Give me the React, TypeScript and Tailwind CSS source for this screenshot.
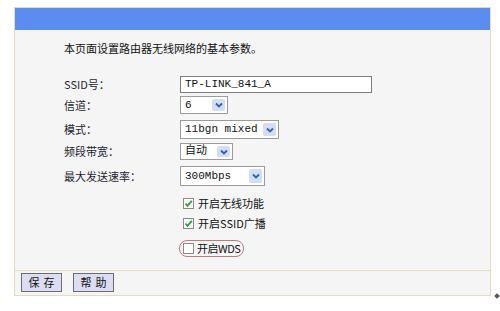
import React from "react";

const cjk = { fontFamily: '"Noto Sans CJK SC", "Noto Sans", sans-serif' };
const mono = { fontFamily: '"Liberation Mono", "Noto Sans CJK SC", monospace' };

function Select({ value, width, height }: { value: string; width: number; height: number }) {
  return (
    <div
      className="flex items-center border border-[#9a9a9a] bg-white"
      style={{ width, height }}
    >
      <span className="flex-1 whitespace-nowrap pl-[4px] text-[11px] leading-none text-[#111]" style={mono}>
        {value}
      </span>
      <span className="mr-[2px] flex h-[calc(100%-4px)] w-[13px] items-center justify-center rounded-[2px] bg-[#d3def5]">
        <svg width="8" height="6" viewBox="0 0 8 6">
          <path d="M1 1.5 L4 4.5 L7 1.5" stroke="#2f5fc4" strokeWidth="1.8" fill="none" />
        </svg>
      </span>
    </div>
  );
}

function Check({ checked }: { checked: boolean }) {
  return (
    <span className="flex h-[11px] w-[11px] shrink-0 items-center justify-center border border-[#8a8a8a] bg-white">
      {checked && (
        <svg width="9" height="9" viewBox="0 0 9 9">
          <path d="M1.5 4.5 L3.5 6.8 L7.8 1.8" stroke="#2f9a3a" strokeWidth="1.8" fill="none" />
        </svg>
      )}
    </span>
  );
}

function Row({ label, h, mt, children }: { label: string; h: number; mt: number; children: React.ReactNode }) {
  return (
    <div className="flex items-center" style={{ height: h, marginTop: mt }}>
      <span className="w-[116px] whitespace-nowrap text-[11px] text-[#1e1e30]" style={cjk}>
        {label}
      </span>
      {children}
    </div>
  );
}

export default function App() {
  return (
    <div className="h-[311px] w-[500px] bg-white pt-[7px] pl-[14px]">
      <div className="flex items-end">
        <div className="w-[477px] border border-[#e4dabd] bg-[#f5f5f6]">
          <div className="h-[22px] bg-[#5b8df1]" />
          <div className="h-[241px] border-b border-[#e4dabd] pt-[10px] pl-[49px]">
            <div className="h-[16px] text-[11px] leading-[16px] text-[#111]" style={cjk}>
              本页面设置路由器无线网络的基本参数。
            </div>
            <div className="mt-[20px]">
              <Row label="SSID号：" h={17} mt={0}>
                <div className="flex h-[17px] w-[192px] items-center border border-[#7d7d7d] bg-white pl-[4px] text-[11px] text-[#111]" style={mono}>
                  TP-LINK_841_A
                </div>
              </Row>
              <Row label="信道：" h={18} mt={3}>
                <Select value="6" width={48} height={18} />
              </Row>
              <Row label="模式：" h={19} mt={6}>
                <Select value="11bgn mixed" width={99} height={19} />
              </Row>
              <Row label="频段带宽：" h={17} mt={4}>
                <Select value="自动" width={53} height={17} />
              </Row>
              <Row label="最大发送速率：" h={20} mt={6}>
                <Select value="300Mbps" width={85} height={20} />
              </Row>
              <div className="ml-[116px] flex flex-col items-start">
                <div className="mt-[9px] flex h-[16px] items-center pl-[3px]">
                  <Check checked />
                  <span className="ml-[4px] whitespace-nowrap text-[11px] text-[#111]" style={cjk}>开启无线功能</span>
                </div>
                <div className="mt-[4px] flex h-[16px] items-center pl-[3px]">
                  <Check checked />
                  <span className="ml-[4px] whitespace-nowrap text-[11px] text-[#111]" style={cjk}>开启SSID广播</span>
                </div>
                <div className="-ml-[1px] mt-[9px] flex h-[17px] items-center rounded-[8px] border-[1.5px] border-[#c47a7a] pl-[3px] pr-[3px]">
                  <Check checked={false} />
                  <span className="ml-[3px] whitespace-nowrap text-[11px] tracking-[-0.5px] text-[#111]" style={cjk}>开启WDS</span>
                </div>
              </div>
            </div>
          </div>
          <div className="flex h-[24px] items-start gap-[11px] pt-[2px] pl-[6px]">
            <button className="flex h-[19px] w-[41px] items-center justify-center border border-[#6a6a7a] bg-[#dcdcf2] text-[11px] tracking-[4px] text-[#111]" style={cjk}>
              <span className="pl-[4px]">保存</span>
            </button>
            <button className="flex h-[19px] w-[41px] items-center justify-center border border-[#6a6a7a] bg-[#dcdcf2] text-[11px] tracking-[4px] text-[#111]" style={cjk}>
              <span className="pl-[4px]">帮助</span>
            </button>
          </div>
        </div>
        <div className="mb-[-2px] ml-[4px] h-[4px] w-[4px] rotate-45 bg-[#555]" />
      </div>
    </div>
  );
}
